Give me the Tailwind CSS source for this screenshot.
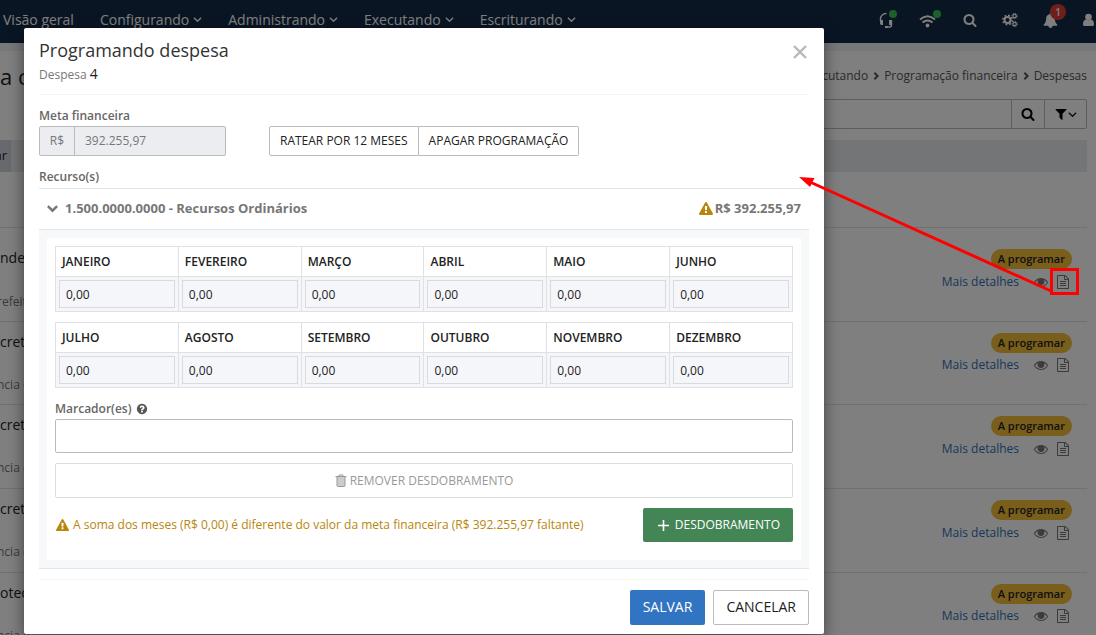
<!DOCTYPE html>
<html lang="pt-BR">
<head>
<meta charset="utf-8">
<title>Programando despesa</title>
<script src="https://cdn.jsdelivr.net/npm/@tailwindcss/browser@4"></script>
</head>
<body class="relative h-screen overflow-hidden bg-white font-['Open_Sans',sans-serif] text-[13px] text-[#222]">
<svg class="hidden" aria-hidden="true">
  <symbol id="search" viewBox="0 0 1792 1792"><path d="M1216 832q0-185-131.5-316.5t-316.5-131.5-316.5 131.5-131.5 316.5 131.5 316.5 316.5 131.5 316.5-131.5 131.5-316.5zm512 832q0 52-38 90t-90 38q-54 0-90-38l-343-342q-179 124-399 124-143 0-273.500-55.500t-225-150-150-225-55.500-273.500 55.500-273.500 150-225 225-150 273.500-55.500 273.500 55.500 225 150 150 225 55.500 273.500q0 220-124 399l343 343q37 37 37 90z"/></symbol>
  <symbol id="warn" viewBox="0 0 1792 1792"><path d="M1024 1375v-190q0-14-9.500-23.500t-22.500-9.500h-192q-13 0-22.500 9.500t-9.500 23.500v190q0 14 9.500 23.500t22.500 9.500h192q13 0 22.500-9.500t9.500-23.500zm-2-374l18-459q0-12-10-19-13-11-24-11h-220q-11 0-24 11-10 7-10 21l17 457q0 10 10 16.500t24 6.500h185q14 0 23.500-6.500t10.500-16.500zm-14-934l768 1408q35 63-2 126-17 29-46.500 46t-63.500 17h-1536q-34 0-63.500-17t-46.500-46q-37-63-2-126l768-1408q17-31 47-49t65-18 65 18 47 49z"/></symbol>
  <symbol id="help" viewBox="0 0 1792 1792"><path d="M1024 1376v-192q0-14-9-23t-23-9h-192q-14 0-23 9t-9 23v192q0 14 9 23t23 9h192q14 0 23-9t9-23zm256-672q0-88-55.500-163t-138.500-116-170-41q-243 0-371 213-15 24 8 42l132 100q7 6 19 6 16 0 25-12 53-68 86-92 34-24 86-24 48 0 85.500 26t37.500 59q0 38-20 61t-68 45q-63 28-115.500 86.500t-52.500 125.500v36q0 14 9 23t23 9h192q14 0 23-9t9-23q0-19 21.500-49.500t54.500-49.500q32-18 49-28.500t46-35 44.500-48 28-60.500 12.500-81zm384 192q0 209-103 385.500t-279.500 279.500-385.500 103-385.500-103-279.500-279.500-103-385.500 103-385.500 279.500-279.500 385.500-103 385.500 103 279.500 279.500 103 385.500z"/></symbol>
  <symbol id="filter" viewBox="0 0 1792 1792"><path d="M1595 295q17 41-14 70l-493 493v742q0 42-39 59-13 5-25 5-27 0-45-19l-256-256q-19-19-19-45v-486l-493-493q-31-29-14-70 17-39 59-39h1280q42 0 59 39z"/></symbol>
  <symbol id="eye" viewBox="0 0 1792 1792"><path d="M1664 960q-152-236-381-353 61 104 61 225 0 185-131.500 316.500t-316.500 131.500-316.500-131.500-131.500-316.500q0-121 61-225-229 117-381 353 133 205 333.500 326.500t434.500 121.500 434.500-121.500 333.500-326.500zm-720-384q0-20-14-34t-34-14q-125 0-214.500 89.500t-89.500 214.500q0 20 14 34t34 14 34-14 14-34q0-86 61-147t147-61q20 0 34-14t14-34zm848 384q0 34-20 69-140 230-376.500 368.500t-499.500 138.500-499.500-139-376.500-368q-20-35-20-69t20-69q140-229 376.500-368t499.500-139 499.500 139 376.500 368q20 35 20 69z"/><circle cx="896" cy="850" r="350"/></symbol>
  <symbol id="file" viewBox="0 0 1792 1792"><path d="M1596 380q28 28 48 76t20 88v1152q0 40-28 68t-68 28h-1344q-40 0-68-28t-28-68v-1600q0-40 28-68t68-28h896q40 0 88 20t76 48zm-444-244v376h376q-10-29-22-41l-313-313q-12-12-41-22zm384 1528v-1024h-416q-40 0-68-28t-28-68v-416h-768v1536h1280zm-1024-864q0-14 9-23t23-9h704q14 0 23 9t9 23v64q0 14-9 23t-23 9h-704q-14 0-23-9t-9-23v-64zm736 224q14 0 23 9t9 23v64q0 14-9 23t-23 9h-704q-14 0-23-9t-9-23v-64q0-14 9-23t23-9h704zm0 256q14 0 23 9t9 23v64q0 14-9 23t-23 9h-704q-14 0-23-9t-9-23v-64q0-14 9-23t23-9h704z"/></symbol>
  <symbol id="bell" viewBox="0 0 1792 1792"><path d="M1728 1408q0 52-38 90t-90 38h-448q0 106-75 181t-181 75-181-75-75-181h-448q-52 0-90-38t-38-90q50-42 91-88t85-119.500 74.500-158.500 50-206 19.500-260q0-152 117-282.500t307-158.500q-8-19-8-39 0-40 28-68t68-28 68 28 28 68q0 20-8 39 190 28 307 158.500t117 282.500q0 139 19.500 260t50 206 74.500 158.500 85 119.500 91 88z"/></symbol>
  <symbol id="down" viewBox="0 0 10 10"><path d="M1 3l4 4 4-4" fill="none" stroke="currentColor" stroke-width="1.600"/></symbol>
  <symbol id="right" viewBox="0 0 10 10"><path d="M3 1l4 4-4 4" fill="none" stroke="currentColor" stroke-width="2.400"/></symbol>
</svg>

<header class="flex h-[43px] items-center justify-between bg-[#142b48] pl-[3px] text-sm text-white">
  <nav class="flex items-center gap-[26px] pb-1">
    <a href="#">Visão geral</a>
    <a href="#" class="flex items-center gap-1">Configurando <svg class="size-[9px]"><use href="#down"/></svg></a>
    <a href="#" class="flex items-center gap-1">Administrando <svg class="size-[9px]"><use href="#down"/></svg></a>
    <a href="#" class="flex items-center gap-1">Executando <svg class="size-[9px]"><use href="#down"/></svg></a>
    <a href="#" class="flex items-center gap-1">Escriturando <svg class="size-[9px]"><use href="#down"/></svg></a>
  </nav>
  <div class="flex items-center gap-[25px] pb-[3px]">
    <div class="flex items-center gap-[26px] pr-[2px]">
      <button aria-label="Suporte" class="relative">
        <svg class="h-4 w-[14px]" viewBox="0 0 14 16"><path d="M1.500 9V7a5.500 5.500 0 0 1 6-5.500M12.500 8v5q0 2-2 2H8" fill="none" stroke="#fff" stroke-width="1.400"/><path d="M1 8h3v5H2.500Q1 13 1 11zM10 8h3v5h-3zM6 14h3v2H6z" fill="#fff"/></svg>
        <span class="absolute -top-[2px] -right-[4px] size-2 rounded-full bg-[#38c153]"></span>
      </button>
      <button aria-label="Conexão" class="relative">
        <svg class="h-4 w-[17px]" viewBox="0 0 17 16"><path d="M1 7.500q7.500-6.500 15 0M3.500 10.500q5-4 10 0" fill="none" stroke="#fff" stroke-width="1.900"/><circle cx="8.500" cy="13.500" r="1.900" fill="#fff"/></svg>
        <span class="absolute -top-[2px] -right-[5px] size-2 rounded-full bg-[#38c153]"></span>
      </button>
    </div>
    <button aria-label="Buscar"><svg class="size-[14px] fill-white"><use href="#search"/></svg></button>
    <button aria-label="Configurações"><svg class="h-4 w-4" viewBox="0 0 16 16" fill="none" stroke="#fff"><circle cx="5.500" cy="8" r="3" stroke-width="2"/><circle cx="5.500" cy="8" r="4.700" stroke-width="1.500" stroke-dasharray="1.850 1.840"/><circle cx="12.600" cy="4" r="1.700" stroke-width="1.200"/><circle cx="12.600" cy="4" r="2.700" stroke-width="1" stroke-dasharray="1.060 1.060"/><circle cx="12.600" cy="12" r="1.700" stroke-width="1.200"/><circle cx="12.600" cy="12" r="2.700" stroke-width="1" stroke-dasharray="1.060 1.060"/></svg></button>
    <button aria-label="Notificações" class="relative">
      <svg class="size-[15px] fill-white"><use href="#bell"/></svg>
      <span class="absolute -top-[9px] -right-[8px] size-4 rounded-full bg-[#e03d35] text-center text-[10px] leading-4 font-semibold">1</span>
    </button>
    <button aria-label="Usuário"><svg class="h-[14px] w-[13px] fill-white" viewBox="0 0 13 14"><circle cx="5.500" cy="4" r="3.300"/><path d="M0 11.500Q0 7 3 6.500q2.500 1.600 5 0 3 .5 3 5 0 1.500-1.500 1.500H1.500q-1.500 0-1.500-1.500z"/></svg></button>
  </div>
</header>
<div class="h-2 bg-[#eef0f4]"></div>

<main class="pr-[9px]">
  <div class="flex h-12 items-center justify-between pt-[2px]">
    <h1 class="text-[22px]">a c</h1>
    <nav class="flex items-center gap-1 text-xs text-[#555]" aria-label="Trilha">
      <a href="#">Executando</a><svg class="size-2"><use href="#right"/></svg><a href="#">Programação financeira</a><svg class="size-2"><use href="#right"/></svg><a href="#">Despesas</a>
    </nav>
  </div>
  <div class="flex h-[30px] pl-8">
    <input aria-label="Pesquisar" class="min-w-0 flex-1 border border-[#bbb]">
    <button aria-label="Pesquisar" class="flex w-8 items-center justify-center border-y border-[#bbb]"><svg class="size-[14px]"><use href="#search"/></svg></button>
    <button aria-label="Filtrar" class="flex w-[43px] items-center justify-center rounded-r-xs border border-[#bbb]"><svg class="size-[14px]"><use href="#filter"/></svg><svg class="size-[9px]"><use href="#down"/></svg></button>
  </div>
  <div class="mt-[11px] flex h-8 bg-[#e8eaee]"><button class="flex w-[11px] items-center justify-end bg-[#cfd2d8] pr-1">ar</button></div>

  <section class="mt-[55px] text-[#222]">
    <article class="flex h-[94px] justify-between border-t border-[#dfe1e4] pt-[21px]">
      <div><p class="text-sm leading-[18px]">nde</p><p class="mt-[27px] -ml-[3px] text-xs text-[#777]">refeit</p></div>
      <div class="flex flex-col items-end gap-[5px] pr-[15px]"><span class="rounded-full bg-[#f2bd38] px-[7px] text-[11px] leading-5 font-semibold">A programar</span><div class="flex items-center pr-[2px] text-xs text-[#2f6fb5]"><a href="#">Mais detalhes</a><button aria-label="Ver" class="ml-[15px]"><svg class="size-[14px] fill-[#777]"><use href="#eye"/></svg></button><button aria-label="Programar" class="ml-2"><svg class="size-[14px] fill-[#777]"><use href="#file"/></svg></button></div></div>
    </article>
    <article class="flex h-[83px] justify-between border-t border-[#dfe1e4] pt-[11px]">
      <div><p class="text-sm leading-[18px]">cret</p><p class="mt-[26px] -ml-[3px] text-xs text-[#777]">ncia e</p></div>
      <div class="flex flex-col items-end gap-1 pr-[15px]"><span class="rounded-full bg-[#f2bd38] px-[7px] text-[11px] leading-5 font-semibold">A programar</span><div class="flex items-center pr-[2px] text-xs text-[#2f6fb5]"><a href="#">Mais detalhes</a><button aria-label="Ver" class="ml-[15px]"><svg class="size-[14px] fill-[#777]"><use href="#eye"/></svg></button><button aria-label="Programar" class="ml-2"><svg class="size-[14px] fill-[#777]"><use href="#file"/></svg></button></div></div>
    </article>
    <article class="flex h-[84px] justify-between border-t border-[#dfe1e4] pt-[11px]">
      <div><p class="text-sm leading-[18px]">cret</p><p class="mt-[26px] -ml-[3px] text-xs text-[#777]">ncia e</p></div>
      <div class="flex flex-col items-end gap-[5px] pr-[15px]"><span class="rounded-full bg-[#f2bd38] px-[7px] text-[11px] leading-5 font-semibold">A programar</span><div class="flex items-center pr-[2px] text-xs text-[#2f6fb5]"><a href="#">Mais detalhes</a><button aria-label="Ver" class="ml-[15px]"><svg class="size-[14px] fill-[#777]"><use href="#eye"/></svg></button><button aria-label="Programar" class="ml-2"><svg class="size-[14px] fill-[#777]"><use href="#file"/></svg></button></div></div>
    </article>
    <article class="flex h-[84px] justify-between border-t border-[#dfe1e4] pt-[11px]">
      <div><p class="text-sm leading-[18px]">cret</p><p class="mt-[26px] -ml-[3px] text-xs text-[#777]">ncia e</p></div>
      <div class="flex flex-col items-end gap-[5px] pr-[15px]"><span class="rounded-full bg-[#f2bd38] px-[7px] text-[11px] leading-5 font-semibold">A programar</span><div class="flex items-center pr-[2px] text-xs text-[#2f6fb5]"><a href="#">Mais detalhes</a><button aria-label="Ver" class="ml-[15px]"><svg class="size-[14px] fill-[#777]"><use href="#eye"/></svg></button><button aria-label="Programar" class="ml-2"><svg class="size-[14px] fill-[#777]"><use href="#file"/></svg></button></div></div>
    </article>
    <article class="flex h-[84px] justify-between border-t border-[#dfe1e4] pt-[11px]">
      <div><p class="text-sm leading-[18px]">oteç</p><p class="mt-[26px] -ml-[3px] text-xs text-[#777]">ncia e</p></div>
      <div class="flex flex-col items-end gap-1 pr-[15px]"><span class="rounded-full bg-[#f2bd38] px-[7px] text-[11px] leading-5 font-semibold">A programar</span><div class="flex items-center pr-[2px] text-xs text-[#2f6fb5]"><a href="#">Mais detalhes</a><button aria-label="Ver" class="ml-[15px]"><svg class="size-[14px] fill-[#777]"><use href="#eye"/></svg></button><button aria-label="Programar" class="ml-2"><svg class="size-[14px] fill-[#777]"><use href="#file"/></svg></button></div></div>
    </article>
  </section>
</main>

<div class="absolute inset-0 bg-black/50 pt-7 pl-6">
  <div role="dialog" aria-labelledby="title" class="w-full max-w-[800px] rounded-xs bg-white px-[15px] pb-[9px] shadow-[0_5px_15px_rgba(0,0,0,0.5)]">
    <div class="flex h-[67px] items-start justify-between border-b border-[#f2f3f5] pt-[10px]">
      <div><h2 id="title" class="text-lg leading-6 text-[#333]">Programando despesa</h2><p class="pt-px text-xs leading-6 text-[#777]">Despesa <span class="text-sm text-[#222]">4</span></p></div>
      <button aria-label="Fechar" class="mt-[7px] mr-[2px]"><svg class="size-[14px]" viewBox="0 0 14 14"><path d="M1 1l12 12M13 1L1 13" stroke="#b8b8b8" stroke-width="2.400"/></svg></button>
    </div>

    <div class="flex items-end gap-[43px] pt-3">
      <div>
        <label for="meta" class="block h-[19px] text-xs leading-[18px] font-semibold text-[#666]">Meta financeira</label>
        <div class="flex h-[30px] w-[187px] rounded-xs border border-[#bbb] bg-[#ebedf1] text-xs text-[#777]">
          <span class="w-[35px] border-r border-[#bbb] text-center leading-[27px]">R$</span>
          <input id="meta" value="392.255,97" disabled class="min-w-0 flex-1 px-[10px]">
        </div>
      </div>
      <div class="flex h-[30px] text-xs text-[#222]">
        <button class="rounded-l-xs border border-[#bbb] px-[10px]">RATEAR POR 12 MESES</button>
        <button class="rounded-r-xs border border-l-0 border-[#bbb] px-[10px]">APAGAR PROGRAMAÇÃO</button>
      </div>
    </div>

    <p class="mt-3 h-5 text-xs leading-[18px] font-semibold text-[#666]">Recurso(s)</p>
    <section class="border-y border-[#e3e5e9] text-xs">
      <div class="flex h-[41px] items-center justify-between border-b border-[#e3e5e9] pr-2 pl-2 text-[13px] font-bold text-[#777]">
        <button class="flex items-center gap-[7px]"><svg class="size-[11px]" viewBox="0 0 10 10"><path d="M.8 2.800L5 7l4.200-4.200" fill="none" stroke="#777" stroke-width="2.200"/></svg>1.500.0000.0000 - Recursos Ordinários</button>
        <span class="flex items-center gap-[2px]"><svg class="size-[14px] fill-[#b8860b]"><use href="#warn"/></svg>R$ 392.255,97</span>
      </div>
      <div class="bg-[#f7f8fa] p-2">
        <div class="bg-white px-2 pt-2 pb-[18px]">
          <table class="w-full table-fixed border-collapse text-[#222]">
            <thead><tr class="h-[30px] text-left">
              <th scope="col" class="border border-[#dfe1e5] px-[6px] font-semibold">JANEIRO</th><th scope="col" class="border border-[#dfe1e5] px-[6px] font-semibold">FEVEREIRO</th><th scope="col" class="border border-[#dfe1e5] px-[6px] font-semibold">MARÇO</th><th scope="col" class="border border-[#dfe1e5] px-[6px] font-semibold">ABRIL</th><th scope="col" class="border border-[#dfe1e5] px-[6px] font-semibold">MAIO</th><th scope="col" class="border border-[#dfe1e5] px-[6px] font-semibold">JUNHO</th>
            </tr></thead>
            <tbody><tr class="h-[35px] bg-[#f5f6fa]">
              <td class="border border-[#dfe1e5] px-[3px]"><input aria-label="Janeiro" value="0,00" class="block h-7 w-full border border-[#d8dadd] px-[6px]"></td><td class="border border-[#dfe1e5] px-[3px]"><input aria-label="Fevereiro" value="0,00" class="block h-7 w-full border border-[#d8dadd] px-[6px]"></td><td class="border border-[#dfe1e5] px-[3px]"><input aria-label="Março" value="0,00" class="block h-7 w-full border border-[#d8dadd] px-[6px]"></td><td class="border border-[#dfe1e5] px-[3px]"><input aria-label="Abril" value="0,00" class="block h-7 w-full border border-[#d8dadd] px-[6px]"></td><td class="border border-[#dfe1e5] px-[3px]"><input aria-label="Maio" value="0,00" class="block h-7 w-full border border-[#d8dadd] px-[6px]"></td><td class="border border-[#dfe1e5] px-[3px]"><input aria-label="Junho" value="0,00" class="block h-7 w-full border border-[#d8dadd] px-[6px]"></td>
            </tr></tbody>
          </table>
          <table class="mt-[10px] w-full table-fixed border-collapse text-[#222]">
            <thead><tr class="h-[30px] text-left">
              <th scope="col" class="border border-[#dfe1e5] px-[6px] font-semibold">JULHO</th><th scope="col" class="border border-[#dfe1e5] px-[6px] font-semibold">AGOSTO</th><th scope="col" class="border border-[#dfe1e5] px-[6px] font-semibold">SETEMBRO</th><th scope="col" class="border border-[#dfe1e5] px-[6px] font-semibold">OUTUBRO</th><th scope="col" class="border border-[#dfe1e5] px-[6px] font-semibold">NOVEMBRO</th><th scope="col" class="border border-[#dfe1e5] px-[6px] font-semibold">DEZEMBRO</th>
            </tr></thead>
            <tbody><tr class="h-[35px] bg-[#f5f6fa]">
              <td class="border border-[#dfe1e5] px-[3px]"><input aria-label="Julho" value="0,00" class="block h-7 w-full border border-[#d8dadd] px-[6px]"></td><td class="border border-[#dfe1e5] px-[3px]"><input aria-label="Agosto" value="0,00" class="block h-7 w-full border border-[#d8dadd] px-[6px]"></td><td class="border border-[#dfe1e5] px-[3px]"><input aria-label="Setembro" value="0,00" class="block h-7 w-full border border-[#d8dadd] px-[6px]"></td><td class="border border-[#dfe1e5] px-[3px]"><input aria-label="Outubro" value="0,00" class="block h-7 w-full border border-[#d8dadd] px-[6px]"></td><td class="border border-[#dfe1e5] px-[3px]"><input aria-label="Novembro" value="0,00" class="block h-7 w-full border border-[#d8dadd] px-[6px]"></td><td class="border border-[#dfe1e5] px-[3px]"><input aria-label="Dezembro" value="0,00" class="block h-7 w-full border border-[#d8dadd] px-[6px]"></td>
            </tr></tbody>
          </table>
          <label for="tags" class="mt-3 flex h-[19px] items-center gap-[5px] pb-[2px] text-xs font-semibold text-[#666]">Marcador(es) <svg class="size-3 fill-[#555]"><use href="#help"/></svg></label>
          <input id="tags" class="block h-[34px] w-full rounded-xs border border-[#bbb] px-2">
          <button class="mt-[10px] flex h-[35px] w-full items-center justify-center gap-[3px] rounded-xs border border-[#dcdddf] text-[#999]"><svg class="h-[13px] w-3" viewBox="0 0 12 13" fill="none" stroke="#999"><path d="M2 3h8v9H2z" fill="#ccc" stroke="none"/><path d="M.5 2.500h11M4 2.500V1h4v1.500M2 3v8.500q0 1 1 1h6q1 0 1-1V3"/></svg>REMOVER DESDOBRAMENTO</button>
          <div class="mt-[10px] flex items-center justify-between">
            <p class="flex items-center gap-1 pl-[1px] text-xs text-[#b8860b]"><svg class="size-[13px] fill-[#b8860b]"><use href="#warn"/></svg>A soma dos meses (R$ 0,00) é diferente do valor da meta financeira (R$ 392.255,97 faltante)</p>
            <button class="flex h-[34px] items-center gap-[6px] rounded-xs bg-[#438554] pr-[13px] pl-[15px] text-xs text-white"><svg class="size-[11px]" viewBox="0 0 11 11"><path d="M5.500 0v11M0 5.500h11" stroke="#fff" stroke-width="1.600"/></svg>DESDOBRAMENTO</button>
          </div>
        </div>
      </div>
    </section>

    <div class="mt-[10px] flex justify-end gap-2 border-t border-[#f2f3f5] pt-[10px] text-sm">
      <button class="h-[35px] rounded-xs bg-[#3174c2] px-[13px] pb-px font-medium text-white">SALVAR</button>
      <button class="h-[35px] rounded-xs border border-[#bbb] px-3 pb-px text-[#222]">CANCELAR</button>
    </div>
  </div>
</div>

<svg class="absolute top-[170px] left-[790px] h-[130px] w-[300px]" viewBox="0 0 300 130" aria-hidden="true">
  <rect x="261.500" y="99.500" width="26" height="24" fill="none" stroke="red" stroke-width="3"/>
  <path d="M261 121L20 12" stroke="red" stroke-width="3"/>
  <path d="M9 7l15.500 1-4.500 9z" fill="red"/>
</svg>
</body>
</html>
